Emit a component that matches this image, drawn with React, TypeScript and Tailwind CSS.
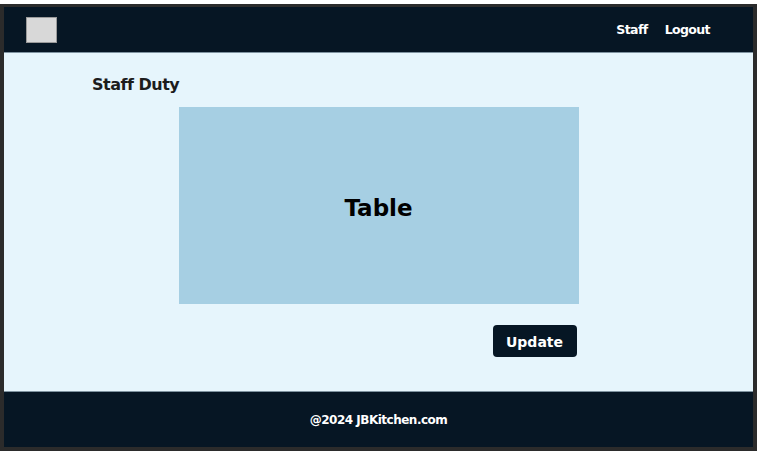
export default function App() {
  return (
    <div className="min-h-screen bg-white pt-[4px] font-['DejaVu_Sans',sans-serif]">
      <div className="flex h-[447px] w-[757px] flex-col border-x-4 border-t-[3px] border-b-4 border-[#2b2b2b]">
        <header className="flex h-[46px] shrink-0 items-center justify-between border-b border-[#7f93a0] bg-[#061624] pl-[22px] pr-[43px]">
          <div className="h-[26px] w-[31px] border border-[#9a9a9a] bg-[#d8d8d8]" />
          <nav className="mt-[2px] flex items-center gap-[17px] text-[12.5px] font-bold tracking-[-0.6px] text-white">
            <a href="#">Staff</a>
            <a href="#">Logout</a>
          </nav>
        </header>

        <main className="flex flex-1 flex-col bg-[#e6f5fc] pt-[22px]">
          <h1 className="pl-[88px] text-[16px] font-bold leading-[20px] tracking-[-0.5px] text-[#1c1c1c]">
            Staff Duty
          </h1>
          <div className="mx-auto mt-[12px] flex h-[197px] w-[400px] items-center justify-center bg-[#a6cfe3] pt-[6px]">
            <span className="text-[23px] font-bold text-black">Table</span>
          </div>
          <div className="mx-auto mt-[21px] flex w-[400px] justify-end pr-[2px]">
            <button className="h-[32px] w-[84px] rounded-[4px] bg-[#061624] pt-[2px] text-[14px] font-bold text-white">
              Update
            </button>
          </div>
        </main>

        <footer className="flex h-[56px] shrink-0 items-center justify-center border-t border-[#7f93a0] bg-[#061624] text-[12px] font-bold tracking-[-0.5px] text-white">
          @2024 JBKitchen.com
        </footer>
      </div>
    </div>
  );
}
